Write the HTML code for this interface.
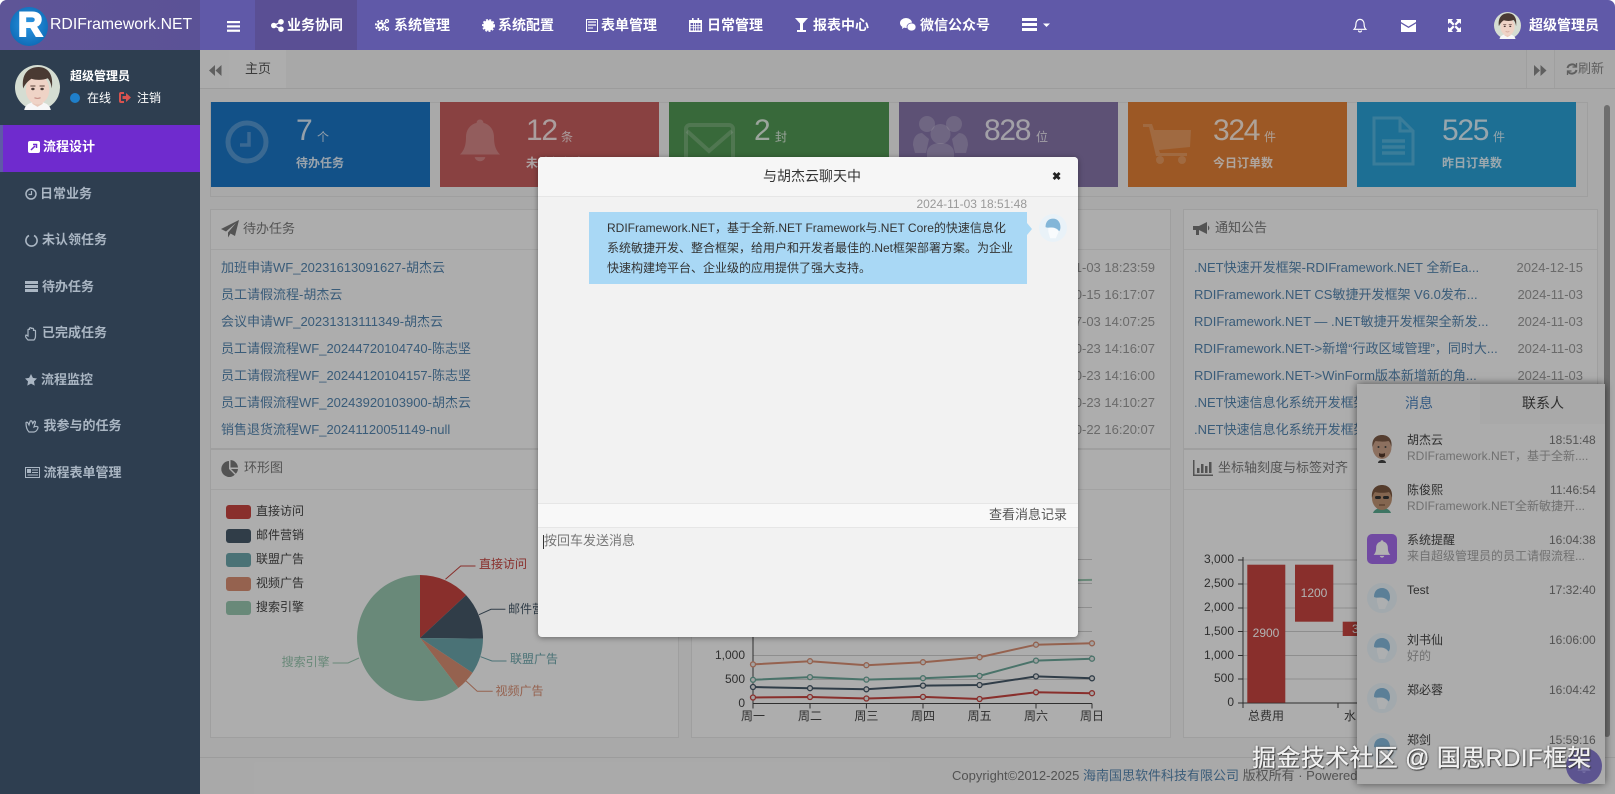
<!DOCTYPE html>
<html lang="zh-CN">
<head>
<meta charset="utf-8">
<title>RDIFramework.NET</title>
<style>
html,body{margin:0;padding:0;width:1615px;height:794px;overflow:hidden;background:#fff}
body{font-family:"Liberation Sans","Noto Sans CJK SC",sans-serif;font-size:13px;color:#333;position:relative}
#root{position:absolute;left:0;top:0;width:1615px;height:794px;overflow:hidden;background:#f3f3f3;border-radius:7px 7px 0 0}
.a{position:absolute}
.t{position:absolute;white-space:nowrap;line-height:20px}
.i{position:absolute;overflow:visible}
.nav{color:#fff;font-weight:bold;font-size:14px}
.menu{color:#aab6c3;font-weight:bold;font-size:13px}
.card{position:absolute;top:102px;height:85px;width:219px}
.num{font-size:30px;letter-spacing:-1.300px;color:rgba(255,255,255,.82);font-weight:normal;line-height:34px;position:absolute;white-space:nowrap;top:114px}
.unit{font-size:12px;color:rgba(255,255,255,.8);position:absolute;white-space:nowrap;top:127px;line-height:20px}
.lab{font-size:12px;font-weight:bold;color:rgba(255,255,255,.85);position:absolute;white-space:nowrap;top:153px;line-height:20px}
.panel{position:absolute;background:#f8f8f8;border:1px solid #e4e4e4;box-sizing:border-box}
.hline{position:absolute;height:1px;background:#e8e8e8}
.ph{color:#777;font-size:13px}
.lk{color:#5484ae;font-size:13px}
.dt{color:#999;font-size:13px;text-align:right}
.nm{font-size:12px;color:#444}
.tm{font-size:12px;color:#777}
.pv{font-size:12px;color:#a2a2a2}
</style>
</head>
<body>
<div id="root">
<svg width="0" height="0" style="position:absolute">
<defs>
<symbol id="man" viewBox="0 0 44 44">
<circle cx="22" cy="22" r="22" fill="#d5ddd2"/>
<path d="M9 44c1-6 7-8 13-8s12 2 13 8z" fill="#f7f7f7"/>
<path d="M17 31h10v7l-5 3-5-3z" fill="#e8c8ba"/>
<ellipse cx="22" cy="24" rx="11.500" ry="14.500" fill="#efd3c6"/>
<path d="M8 23C6 9 13 2 23 2c9 0 15 7 13 21-.5-4-2-8-4-10-5 2-11 2-16 .500-3 2-6 5-8 9.500z" fill="#4a3a33"/>
<path d="M15 20.500h5M24 20.500h5" stroke="#5a4038" stroke-width="1"/>
<ellipse cx="17.500" cy="23.500" rx="1.700" ry="1.200" fill="#4a3a36"/><ellipse cx="26.500" cy="23.500" rx="1.700" ry="1.200" fill="#4a3a36"/>
<path d="M19 32c2 .8 4 .8 6 0" stroke="#c28a80" fill="none"/>
</symbol>
<symbol id="def" viewBox="0 0 30 30">
<circle cx="15" cy="15" r="15" fill="#e9f2f8"/>
<path d="M7 14C7 8 10.500 5 15 5c5 0 8 4 8 9 0 2-.5 3.500-1.500 4.500C20 16 17 14.500 14 14.500c-2.500 0-5 .5-7-.5z" fill="#83b6d8"/>
<path d="M10 15c2-.5 4-.5 6 0 3 1.500 5 3 5 4l-3 7h-6l-2-7z" fill="#f8fbfd"/>
</symbol>
<symbol id="bell" viewBox="0 0 24 24">
<path d="M12 1.500c-1 0-1.700.7-1.700 1.700C7 4 5 6.800 5 10.300c0 4.200-1 6.700-3 8.700h20c-2-2-3-4.500-3-8.700 0-3.500-2-6.300-5.300-7.100 0-1-.7-1.700-1.700-1.700zM9.300 20.300a2.800 2.800 0 0 0 5.400 0z"/>
</symbol>
<radialGradient id="lg" cx=".5" cy=".45" r=".55"><stop offset="0" stop-color="#2b97e4"/><stop offset="1" stop-color="#0f6db8"/></radialGradient>
</defs>
</svg>

<!-- tab bar -->
<div class="a" style="left:200px;top:50px;width:1415px;height:39px;background:#f1f1f1;border-bottom:1px solid #e0e0e0;box-sizing:border-box"></div>
<div class="a" style="left:200px;top:50px;width:29px;height:38px;background:#f6f6f6"></div>
<svg class="i" style="left:209px;top:65px" width="13" height="11" viewBox="0 0 13 11" fill="#888"><path d="M6 0v11L0 5.500zM12.500 0v11l-6-5.500z"/></svg>
<div class="a" style="left:229px;top:50px;width:57px;height:38px;background:#f8f8f8"></div>
<div class="t" style="left:245px;top:59px;color:#555;font-size:13px">主页</div>
<div class="a" style="left:1526px;top:50px;width:29px;height:38px;background:#f3f3f3;border-left:1px solid #e4e4e4;border-right:1px solid #e4e4e4;box-sizing:border-box"></div>
<svg class="i" style="left:1534px;top:65px" width="13" height="11" viewBox="0 0 13 11" fill="#888"><path d="M0 0v11l6-5.500zM6.500 0v11l6-5.500z"/></svg>
<svg class="i" style="left:1566px;top:63px" width="12" height="12" viewBox="0 0 12 12" fill="none" stroke="#888" stroke-width="2"><path d="M1.500 5A4.700 4.700 0 0 1 10 3.500M10.500 7A4.700 4.700 0 0 1 2 8.500"/><path d="M10.500 0v4h-4M1.500 12V8h4" stroke-width="1.300"/></svg>
<div class="t" style="left:1578px;top:59px;color:#888;font-size:13px">刷新</div>

<!-- stat container -->
<div class="panel" style="left:210px;top:102px;width:1378px;height:95px;background:#f3f3f3"></div>
<div class="card" style="left:211px;background:#1a74c3"></div>
<div class="card" style="left:440px;background:#c55e5e"></div>
<div class="card" style="left:669px;width:220px;background:#519753"></div>
<div class="card" style="left:899px;background:#8675a8"></div>
<div class="card" style="left:1128px;background:#e07f35"></div>
<div class="card" style="left:1357px;background:#2aa0d5"></div>

<svg class="i" style="left:225px;top:120px" width="44" height="44" viewBox="0 0 44 44" fill="none" stroke="#fff" stroke-opacity=".25"><circle cx="22" cy="22" r="19" stroke-width="5"/><path d="M24 12v13H15" stroke-width="3.500"/></svg>
<svg class="i" style="left:456px;top:115px;fill:#fff;fill-opacity:.25" width="48" height="51"><use href="#bell" width="48" height="51"/></svg>
<svg class="i" style="left:684px;top:123px" width="51" height="44" viewBox="0 0 51 44" fill="none" stroke="#fff" stroke-opacity=".2" stroke-width="4"><rect x="2" y="2" width="47" height="40" rx="4"/><path d="M3 8l22 20L48 8"/></svg>
<svg class="i" style="left:913px;top:115px" width="55" height="50" viewBox="0 0 55 50" fill="#fff" fill-opacity=".22"><circle cx="14" cy="9" r="8"/><circle cx="41" cy="9" r="8"/><circle cx="27.500" cy="19" r="10"/><path d="M0 30c0-8 4-12 9-12l7 6-3 14H2zM55 30c0-8-4-12-9-12l-7 6 3 14h11zM14 50V38c0-6 5-10 13.500-10S41 32 41 38v12z"/></svg>
<svg class="i" style="left:1143px;top:123px" width="48" height="41" viewBox="0 0 48 41" fill="#fff" fill-opacity=".2"><path d="M0 1h9l2 6h37l-1 17-31 3 1 3h27v3H13L6 4H0z"/><circle cx="17" cy="37" r="4"/><circle cx="39" cy="37" r="4"/></svg>
<svg class="i" style="left:1372px;top:116px" width="43" height="50" viewBox="0 0 43 50" fill="none" stroke="#fff" stroke-opacity=".2" stroke-width="3"><path d="M2 2h26l13 13v33H2zM28 2v13h13"/><path d="M10 25h23M10 31h23M10 37h23" stroke-width="3.500"/></svg>

<div class="num" style="left:296px">7</div><div class="unit" style="left:317px">个</div><div class="lab" style="left:296px">待办任务</div>
<div class="num" style="left:526px">12</div><div class="unit" style="left:561px">条</div><div class="lab" style="left:526px">未认领任务</div>
<div class="num" style="left:754px">2</div><div class="unit" style="left:775px">封</div>
<div class="num" style="left:984px">828</div><div class="unit" style="left:1036px">位</div>
<div class="num" style="left:1213px">324</div><div class="unit" style="left:1264px">件</div><div class="lab" style="left:1213px">今日订单数</div>
<div class="num" style="left:1442px">525</div><div class="unit" style="left:1493px">件</div><div class="lab" style="left:1442px">昨日订单数</div>

<!-- row 1 panels -->
<div class="panel" style="left:210px;top:209px;width:961px;height:240px"></div>
<div class="hline" style="left:211px;top:249px;width:959px"></div>
<svg class="i" style="left:221px;top:220px" width="18" height="18" viewBox="0 0 18 18" fill="#777"><path d="M18 0L14 16 9.500 13.500 7 17.500V12.500L15 3 5 11.500 0 9z"/></svg>
<div class="t ph" style="left:243px;top:219px">待办任务</div>
<div class="t lk" style="left:221px;top:258px">加班申请WF_20231613091627-胡杰云</div>
<div class="t lk" style="left:221px;top:285px">员工请假流程-胡杰云</div>
<div class="t lk" style="left:221px;top:312px">会议申请WF_20231313111349-胡杰云</div>
<div class="t lk" style="left:221px;top:339px">员工请假流程WF_20244720104740-陈志坚</div>
<div class="t lk" style="left:221px;top:366px">员工请假流程WF_20244120104157-陈志坚</div>
<div class="t lk" style="left:221px;top:393px">员工请假流程WF_20243920103900-胡杰云</div>
<div class="t lk" style="left:221px;top:420px">销售退货流程WF_20241120051149-null</div>
<div class="t dt" style="right:460px;top:258px">2024-11-03 18:23:59</div>
<div class="t dt" style="right:460px;top:285px">2024-10-15 16:17:07</div>
<div class="t dt" style="right:460px;top:312px">2024-07-03 14:07:25</div>
<div class="t dt" style="right:460px;top:339px">2024-10-23 14:16:07</div>
<div class="t dt" style="right:460px;top:366px">2024-10-23 14:16:00</div>
<div class="t dt" style="right:460px;top:393px">2024-10-23 14:10:27</div>
<div class="t dt" style="right:460px;top:420px">2024-10-22 16:20:07</div>

<div class="panel" style="left:1183px;top:209px;width:415px;height:240px"></div>
<div class="hline" style="left:1184px;top:249px;width:413px"></div>
<svg class="i" style="left:1193px;top:222px" width="17" height="14" viewBox="0 0 17 14" fill="#777"><path d="M0 4h6L14 0v12L6 8v5H3V8H0zM15 3.500a3 3 0 0 1 0 5z"/></svg>
<div class="t ph" style="left:1215px;top:218px">通知公告</div>
<div class="t lk" style="left:1194px;top:258px">.NET快速开发框架-RDIFramework.NET 全新Ea...</div>
<div class="t lk" style="left:1194px;top:285px">RDIFramework.NET CS敏捷开发框架 V6.0发布...</div>
<div class="t lk" style="left:1194px;top:312px">RDIFramework.NET — .NET敏捷开发框架全新发...</div>
<div class="t lk" style="left:1194px;top:339px">RDIFramework.NET-&gt;新增“行政区域管理”，同时大...</div>
<div class="t lk" style="left:1194px;top:366px">RDIFramework.NET-&gt;WinForm版本新增新的角...</div>
<div class="t lk" style="left:1194px;top:393px">.NET快速信息化系统开发框架 V6.0 版本发布...</div>
<div class="t lk" style="left:1194px;top:420px">.NET快速信息化系统开发框架 V5.1 版本发布...</div>
<div class="t dt" style="right:32px;top:258px">2024-12-15</div>
<div class="t dt" style="right:32px;top:285px">2024-11-03</div>
<div class="t dt" style="right:32px;top:312px">2024-11-03</div>
<div class="t dt" style="right:32px;top:339px">2024-11-03</div>
<div class="t dt" style="right:32px;top:366px">2024-11-03</div>

<!-- row 2 panels -->
<div class="panel" style="left:210px;top:449px;width:469px;height:289px"></div>
<div class="panel" style="left:691px;top:449px;width:480px;height:289px"></div>
<div class="panel" style="left:1183px;top:449px;width:415px;height:289px"></div>
<div class="hline" style="left:211px;top:489px;width:467px"></div>
<div class="hline" style="left:692px;top:489px;width:478px"></div>
<div class="hline" style="left:1184px;top:489px;width:413px"></div>
<svg class="i" style="left:221px;top:460px" width="17" height="17" viewBox="0 0 17 17" fill="#777"><path d="M8 1v8l5.800 5.800A8 8 0 1 1 8 1zM9.500 0A8 8 0 0 1 17 7.500H9.500zM10 9h7a8 8 0 0 1-2.200 4.800z"/></svg>
<div class="t ph" style="left:244px;top:458px">环形图</div>
<svg class="i" style="left:1193px;top:460px" width="20" height="16" viewBox="0 0 20 16" fill="#777"><path d="M0 0h1.500v14.500H20V16H0z"/><rect x="4" y="8" width="2.500" height="5"/><rect x="8" y="4" width="2.500" height="9"/><rect x="12" y="6" width="2.500" height="7"/><rect x="16" y="2" width="2.500" height="11"/></svg>
<div class="t ph" style="left:1218px;top:458px">坐标轴刻度与标签对齐</div>

<!-- charts -->
<svg class="i" style="left:0;top:0;font-family:'Liberation Sans','Noto Sans CJK SC',sans-serif;font-size:12px" width="1615" height="794" viewBox="0 0 1615 794">
<rect x="226" y="505" width="25" height="14" rx="3" fill="#c4443f"/>
<rect x="226" y="529" width="25" height="14" rx="3" fill="#465868"/>
<rect x="226" y="553" width="25" height="14" rx="3" fill="#6ba4aa"/>
<rect x="226" y="577" width="25" height="14" rx="3" fill="#d68d72"/>
<rect x="226" y="601" width="25" height="14" rx="3" fill="#97c4ae"/>
<g fill="#444"><text x="256" y="515">直接访问</text><text x="256" y="539">邮件营销</text><text x="256" y="563">联盟广告</text><text x="256" y="587">视频广告</text><text x="256" y="611">搜索引擎</text></g>
<path d="M420 638V575A63 63 0 0 1 466.100 595.100z" fill="#c4443f"/>
<path d="M420 638L466.100 595.100A63 63 0 0 1 483 638.660z" fill="#465868"/>
<path d="M420 638L483 638.660A63 63 0 0 1 472.500 672.800z" fill="#6ba4aa"/>
<path d="M420 638L472.500 672.800A63 63 0 0 1 458.400 688z" fill="#d68d72"/>
<path d="M420 638L458.400 688A63 63 0 1 1 420 575z" fill="#97c4ae"/>
<g fill="none" stroke-width="1">
<path d="M445.500 579.300L460.700 566H475.500" stroke="#c4443f"/>
<path d="M479 614.700L491 609.300H505.400" stroke="#465868"/>
<path d="M480.600 656.700L492 661H506.500" stroke="#6ba4aa"/>
<path d="M465.800 680.700L477.200 691.300H492.700" stroke="#d68d72"/>
<path d="M359 658L348 663H332.600" stroke="#97c4ae"/>
</g>
<text x="479" y="568" fill="#c4443f">直接访问</text>
<text x="508" y="613" fill="#465868">邮件营销</text>
<text x="510" y="663" fill="#6ba4aa">联盟广告</text>
<text x="495.500" y="695" fill="#d68d72">视频广告</text>
<text x="281.600" y="666" fill="#97c4ae">搜索引擎</text>
<g stroke="#ccc" stroke-width="1"><path d="M753 559.500H1092M753 583.500H1092M753 607.500H1092M753 631.500H1092M753 655.500H1092M753 679.500H1092"/></g>
<path d="M753 559V703.500H1092M753 703.500v5M810 703.500v5M866.400 703.500v5M923 703.500v5M979.600 703.500v5M1036 703.500v5M1092 703.500v5" stroke="#444" fill="none"/>
<g fill="#444" text-anchor="end"><text x="745" y="659">1,000</text><text x="745" y="683">500</text><text x="745" y="707">0</text></g>
<g fill="#444" text-anchor="middle"><text x="753" y="720">周一</text><text x="810" y="720">周二</text><text x="866.400" y="720">周三</text><text x="923" y="720">周四</text><text x="979.600" y="720">周五</text><text x="1036" y="720">周六</text><text x="1092" y="720">周日</text></g>
<g fill="none" stroke-width="2">
<path stroke="#c4443f" d="M753 697.500L810 697L866.400 698.500L923 696.900L979.600 699L1036 692.300L1092 693.200"/>
<path stroke="#465868" d="M753 687L810 688.200L866.400 689.300L923 685.600L979.600 685L1036 676.400L1092 678.300"/>
<path stroke="#6aa598" d="M753 679.800L810 677.100L866.400 679.600L923 678.200L979.600 675.900L1036 660.600L1092 658.700"/>
<path stroke="#d68d72" d="M753 664.400L810 661.200L866.400 665.200L923 662.200L979.600 657.200L1036 644.700L1092 643.300"/>
<path stroke="#97c4ae" d="M753 625L810 616.400L866.400 621.900L923 617.400L979.600 595.300L1036 580.900L1092 579.900"/>
</g>
<g fill="#e8e8e8" stroke-width="1.300">
<g stroke="#c4443f"><circle cx="753" cy="697.500" r="2.500"/><circle cx="810" cy="697" r="2.500"/><circle cx="866.400" cy="698.500" r="2.500"/><circle cx="923" cy="696.900" r="2.500"/><circle cx="979.600" cy="699" r="2.500"/><circle cx="1036" cy="692.300" r="2.500"/><circle cx="1092" cy="693.200" r="2.500"/></g>
<g stroke="#465868"><circle cx="753" cy="687" r="2.500"/><circle cx="810" cy="688.200" r="2.500"/><circle cx="866.400" cy="689.300" r="2.500"/><circle cx="923" cy="685.600" r="2.500"/><circle cx="979.600" cy="685" r="2.500"/><circle cx="1036" cy="676.400" r="2.500"/><circle cx="1092" cy="678.300" r="2.500"/></g>
<g stroke="#6aa598"><circle cx="753" cy="679.800" r="2.500"/><circle cx="810" cy="677.100" r="2.500"/><circle cx="866.400" cy="679.600" r="2.500"/><circle cx="923" cy="678.200" r="2.500"/><circle cx="979.600" cy="675.900" r="2.500"/><circle cx="1036" cy="660.600" r="2.500"/><circle cx="1092" cy="658.700" r="2.500"/></g>
<g stroke="#d68d72"><circle cx="753" cy="664.400" r="2.500"/><circle cx="810" cy="661.200" r="2.500"/><circle cx="866.400" cy="665.200" r="2.500"/><circle cx="923" cy="662.200" r="2.500"/><circle cx="979.600" cy="657.200" r="2.500"/><circle cx="1036" cy="644.700" r="2.500"/><circle cx="1092" cy="643.300" r="2.500"/></g>
</g>
<g stroke="#ccc"><path d="M1243 560H1570M1243 584H1570M1243 608H1570M1243 631.500H1570M1243 655.500H1570M1243 679H1570"/></g>
<path d="M1243 557V703H1570M1238 560h5M1238 584h5M1238 608h5M1238 631.500h5M1238 655.500h5M1238 679h5M1238 703h5M1243 703v5M1338 703v5" stroke="#444" fill="none"/>
<g fill="#444" text-anchor="end"><text x="1234" y="563">3,000</text><text x="1234" y="587">2,500</text><text x="1234" y="611">2,000</text><text x="1234" y="635">1,500</text><text x="1234" y="659">1,000</text><text x="1234" y="682">500</text><text x="1234" y="706">0</text></g>
<rect x="1247.300" y="564.700" width="38" height="138" fill="#c4443f"/>
<rect x="1295" y="564.700" width="38.300" height="57" fill="#c4443f"/>
<rect x="1342.700" y="621.700" width="38" height="14.300" fill="#c4443f"/>
<g fill="#fff" text-anchor="middle"><text x="1266" y="637">2900</text><text x="1314" y="597">1200</text><text x="1362" y="633">300</text></g>
<g fill="#444" text-anchor="middle"><text x="1266" y="720">总费用</text><text x="1362" y="720">水电费</text></g>
</svg>

<div class="a" style="left:1604px;top:105px;width:6px;height:632px;background:#9e9e9e;border-radius:3px"></div>

<!-- footer -->
<div class="hline" style="left:200px;top:757px;width:1415px;background:#e0e0e0"></div>
<div class="t" style="left:952px;top:766px;color:#777;font-size:13px">Copyright©2012-2025 <span style="color:#5484ae">海南国思软件科技有限公司</span> 版权所有 · Powered by RDIFramework.NET</div>

<!-- chat panel -->
<div class="a" style="left:1357px;top:384px;width:248px;height:400px;background:#f6f6f6;overflow:hidden;box-shadow:0 0 8px rgba(0,0,0,.55)">
<div class="a" style="left:-1357px;top:-384px;width:1615px;height:794px">
<div class="a" style="left:1480px;top:384px;width:125px;height:40px;background:#f2f2f2"></div>
<div class="t" style="left:1405px;top:393px;font-size:14px;color:#4f85bd">消息</div>
<div class="t" style="left:1522px;top:393px;font-size:14px;color:#444">联系人</div>

<svg class="i" style="left:1367px;top:433px" width="30" height="30" viewBox="0 0 30 30"><path d="M11 30c0-2 2-3 4-3s4 1 4 3z" fill="#444"/><ellipse cx="15" cy="14" rx="9.500" ry="12" fill="#c9a189"/><path d="M5.500 14C4.500 6 9 2 15 2s10.500 4 9.500 12c-1-3-1.500-5-3-6-4 .8-8 .8-13 0-1 1-2 3-3 6z" fill="#7a5a45"/><circle cx="11.500" cy="14" r="1" fill="#444"/><circle cx="18.500" cy="14" r="1" fill="#444"/><path d="M12 20c2 1 4 1 6 0v3c-2 2-4 2-6 0z" fill="#54392c"/></svg>
<div class="t nm" style="left:1407px;top:430px">胡杰云</div><div class="t tm" style="top:430px;left:1549px">18:51:48</div>
<div class="t pv" style="left:1407px;top:446px">RDIFramework.NET，基于全新....</div>

<svg class="i" style="left:1367px;top:483px" width="30" height="30" viewBox="0 0 30 30"><path d="M6 30c1-3 4-5 9-5s8 2 9 5z" fill="#5aa88f"/><ellipse cx="15" cy="15" rx="10" ry="12" fill="#bd9273"/><path d="M5 15C4 6 9 2 15 2s11 4 10 13c-1-3-2-5-3-6-4 1-10 1-14 0-1 1-2 3-3 6z" fill="#7a5640"/><rect x="8" y="13" width="6" height="3" rx="1.500" fill="#333"/><rect x="16" y="13" width="6" height="3" rx="1.500" fill="#333"/><path d="M12 22h6" stroke="#6a4a36"/></svg>
<div class="t nm" style="left:1407px;top:480px">陈俊熙</div><div class="t tm" style="top:480px;left:1550px">11:46:54</div>
<div class="t pv" style="left:1407px;top:496px">RDIFramework.NET全新敏捷开...</div>

<div class="a" style="left:1367px;top:534px;width:30px;height:30px;border-radius:5px;background:#a26ae8"></div>
<svg class="i" style="left:1372px;top:539px;fill:#fff" width="20" height="20"><use href="#bell" width="20" height="20"/></svg>
<div class="t nm" style="left:1407px;top:530px">系统提醒</div><div class="t tm" style="top:530px;left:1549px">16:04:38</div>
<div class="t pv" style="left:1407px;top:546px">来自超级管理员的员工请假流程...</div>

<svg class="i" style="left:1367px;top:583px" width="30" height="30"><use href="#def" width="30" height="30"/></svg>
<div class="t nm" style="left:1407px;top:580px">Test</div><div class="t tm" style="top:580px;left:1549px">17:32:40</div>

<svg class="i" style="left:1367px;top:633px" width="30" height="30"><use href="#def" width="30" height="30"/></svg>
<div class="t nm" style="left:1407px;top:630px">刘书仙</div><div class="t tm" style="top:630px;left:1549px">16:06:00</div>
<div class="t pv" style="left:1407px;top:646px">好的</div>

<svg class="i" style="left:1367px;top:683px" width="30" height="30"><use href="#def" width="30" height="30"/></svg>
<div class="t nm" style="left:1407px;top:680px">郑必蓉</div><div class="t tm" style="top:680px;left:1549px">16:04:42</div>

<svg class="i" style="left:1367px;top:733px" width="30" height="30"><use href="#def" width="30" height="30"/></svg>
<div class="t nm" style="left:1407px;top:730px">郑剑</div><div class="t tm" style="top:730px;left:1549px">15:59:16</div>
</div>
</div>

<!-- dim overlay -->
<div class="a" style="left:200px;top:50px;width:1415px;height:744px;background:rgba(0,0,0,.3)"></div>

<!-- header -->
<div class="a" style="left:0;top:0;width:1615px;height:50px;background:#6059a8"></div>
<div class="a" style="left:0;top:0;width:200px;height:50px;background:linear-gradient(90deg,#5e5597,#5b5296)"></div>
<div class="a" style="left:255px;top:0;width:102px;height:50px;background:#5a4f94"></div>
<svg class="i" style="left:10px;top:7px" width="38" height="39" viewBox="0 0 38 39"><ellipse cx="19" cy="19.500" rx="19" ry="19.500" fill="url(#lg)"/></svg>
<div class="t" style="left:18px;top:6px;line-height:38px;font-size:34px;font-weight:bold;color:#fff;-webkit-text-stroke:2px #fff">R</div>
<div class="t" style="left:50px;top:15px;font-size:15.800px;color:#fff">RDIFramework.NET</div>

<svg class="i" style="left:227px;top:21px" width="13" height="11" viewBox="0 0 13 11" fill="#fff"><rect width="13" height="2.200"/><rect y="4.300" width="13" height="2.200"/><rect y="8.600" width="13" height="2.200"/></svg>
<svg class="i" style="left:271px;top:19px" width="13" height="13" viewBox="0 0 13 13" fill="#fff" stroke="#fff"><circle cx="2.800" cy="6.500" r="2.300"/><circle cx="10" cy="2.800" r="2.300"/><circle cx="10" cy="10.200" r="2.300"/><path d="M3 6.500L10 2.800M3 6.500L10 10.200" stroke-width="1.300"/></svg>
<div class="t nav" style="left:287px;top:15px">业务协同</div>
<svg class="i" style="left:375px;top:18px" width="15" height="14" viewBox="0 0 15 14" fill="none" stroke="#fff"><circle cx="5.500" cy="7.500" r="2.500" stroke-width="2"/><circle cx="5.500" cy="7.500" r="4.700" stroke-width="1.800" stroke-dasharray="2 1.700"/><circle cx="12" cy="3" r="1.500" stroke-width="1.300"/><circle cx="12" cy="11" r="1.500" stroke-width="1.300"/></svg>
<div class="t nav" style="left:394px;top:15px">系统管理</div>
<svg class="i" style="left:482px;top:19px" width="13" height="13" viewBox="0 0 13 13" fill="#fff"><circle cx="6.500" cy="6.500" r="5.300"/><circle cx="6.500" cy="6.500" r="5.800" fill="none" stroke="#fff" stroke-width="1.400" stroke-dasharray="2 1.500"/></svg>
<div class="t nav" style="left:498px;top:15px">系统配置</div>
<svg class="i" style="left:586px;top:19px" width="12" height="13" viewBox="0 0 12 13" fill="none" stroke="#fff"><rect x=".5" y=".5" width="11" height="12"/><path d="M2 3h8M2 6h8" stroke-width="1.300"/><path d="M2 9h5"/></svg>
<div class="t nav" style="left:601px;top:15px">表单管理</div>
<svg class="i" style="left:689px;top:18px" width="13" height="14" viewBox="0 0 13 14" fill="#fff"><path d="M0 2h13v12H0z"/><rect x="3" y="0" width="1.600" height="3"/><rect x="8.500" y="0" width="1.600" height="3"/><path d="M1.500 5h10v7.500h-10z" fill="#6059a8"/><path d="M1.500 7h10v.8h-10zM1.500 9.500h10v.8h-10zM4 5h.8v7.500H4zM6.200 5H7v7.500h-.8zM8.600 5h.8v7.500h-.8z"/></svg>
<div class="t nav" style="left:707px;top:15px">日常管理</div>
<svg class="i" style="left:795px;top:18px" width="13" height="14" viewBox="0 0 13 14" fill="#fff"><path d="M0 0h13L8 5.500V12h3v2H2v-2h3V5.500z"/></svg>
<div class="t nav" style="left:813px;top:15px">报表中心</div>
<svg class="i" style="left:900px;top:18px" width="16" height="14" viewBox="0 0 16 14" fill="#fff"><ellipse cx="6" cy="5" rx="6" ry="5"/><path d="M2.500 8L2 11l3-2z"/><ellipse cx="11.500" cy="9" rx="4.500" ry="4" stroke="#6059a8" stroke-width=".7"/></svg>
<div class="t nav" style="left:920px;top:15px">微信公众号</div>
<svg class="i" style="left:1022px;top:18px" width="29" height="14" viewBox="0 0 29 14" fill="#fff"><rect width="15" height="3"/><rect y="5" width="15" height="3"/><rect y="10" width="15" height="3"/><path d="M21 5.500h7l-3.500 3.500z"/></svg>

<svg class="i" style="left:1353px;top:18px" width="14" height="15" viewBox="0 0 24 25" fill="none" stroke="#fff" stroke-width="2"><path d="M12 2c-4 0-7 3.500-7 8 0 5-1 7-3 9h20c-2-2-3-4-3-9 0-4.500-3-8-7-8zM9.500 21a2.500 2.500 0 0 0 5 0"/></svg>
<svg class="i" style="left:1401px;top:20px" width="15" height="12" viewBox="0 0 15 12" fill="#fff"><path d="M0 0h15v2L7.500 6.500 0 2zM0 3.500l7.500 4.500L15 3.500V12H0z"/></svg>
<svg class="i" style="left:1448px;top:19px" width="13" height="13" viewBox="0 0 13 13" fill="#fff"><path d="M0 0h5L3.500 1.800 6.500 5 5 6.500 1.800 3.500 0 5zM13 0v5l-1.800-1.500L8 6.500 6.500 5 9.500 1.800 8 0zM0 13V8l1.800 1.500L5 6.500 6.500 8 3.500 11.200 5 13zM13 13H8l1.500-1.800L6.500 8 8 6.500l3.200 3L13 8z"/></svg>
<svg class="i" style="left:1494px;top:12px" width="27" height="27"><use href="#man" width="27" height="27"/></svg>
<div class="t nav" style="left:1529px;top:15px">超级管理员</div>

<!-- sidebar -->
<div class="a" style="left:0;top:50px;width:200px;height:744px;background:#2e3e50"></div>
<svg class="i" style="left:15px;top:65px" width="45" height="45"><use href="#man" width="45" height="45"/></svg>
<div class="t" style="left:70px;top:66px;color:#fff;font-size:12px;font-weight:bold">超级管理员</div>
<div class="a" style="left:70px;top:93px;width:10px;height:10px;border-radius:50%;background:#1f7fca"></div>
<div class="t" style="left:87px;top:88px;color:#fff;font-size:12px">在线</div>
<svg class="i" style="left:119px;top:92px" width="12" height="11" viewBox="0 0 12 11" fill="#d9534f"><path d="M5 0H2a2 2 0 0 0-2 2v7a2 2 0 0 0 2 2h3V9H2V2h3z"/><path d="M7 1l5 4.500L7 10V7H3.500V4H7z"/></svg>
<div class="t" style="left:137px;top:88px;color:#fff;font-size:12px">注销</div>

<div class="a" style="left:0;top:125px;width:200px;height:47px;background:#6f2bce"></div>
<div class="a" style="left:0;top:125px;width:3px;height:47px;background:#5f5aa6"></div>
<svg class="i" style="left:28px;top:141px" width="12" height="12" viewBox="0 0 12 12"><rect width="12" height="12" rx="2" fill="#fff"/><path d="M3 9L7 5M5 3.500h3.500V7" stroke="#6f2bce" stroke-width="1.500" fill="none"/></svg>
<div class="t" style="left:43px;top:137px;color:#fff;font-size:13px;font-weight:bold">流程设计</div>

<svg class="i" style="left:25px;top:188px" width="12" height="12" viewBox="0 0 12 12" fill="none" stroke="#aab6c3" stroke-width="1.500"><circle cx="6" cy="6" r="5"/><path d="M6.500 3v3.500H3.500" stroke-width="1.200"/></svg>
<div class="t menu" style="left:40px;top:184px">日常业务</div>
<svg class="i" style="left:25px;top:234px" width="13" height="13" viewBox="0 0 13 13" fill="none" stroke="#aab6c3" stroke-width="1.600"><path d="M4 1.500A5.600 5.600 0 1 0 9 1.500"/></svg>
<div class="t menu" style="left:42px;top:230px">未认领任务</div>
<svg class="i" style="left:25px;top:281px" width="13" height="11" viewBox="0 0 13 11" fill="#aab6c3"><rect width="13" height="3"/><rect y="4" width="13" height="3"/><rect y="8" width="13" height="3"/></svg>
<div class="t menu" style="left:42px;top:277px">待办任务</div>
<svg class="i" style="left:25px;top:327px" width="12" height="14" viewBox="0 0 12 14" fill="none" stroke="#aab6c3" stroke-width="1.200"><path d="M3 13C1 11 0 9 1 8l2 1V3c0-1 1.500-1 1.500 0V1.500c0-1 2-1 2 0V2c0-1 2-1 2 0v2c0-1 2-1 2 0v5c0 2-.5 3-1.500 4z"/></svg>
<div class="t menu" style="left:42px;top:323px">已完成任务</div>
<svg class="i" style="left:25px;top:374px" width="12" height="12" viewBox="0 0 12 12" fill="#aab6c3"><path d="M6 0l1.900 3.900 4.100.6-3 2.900.7 4.200L6 9.600 2.300 11.600 3 7.400 0 4.500l4.100-.6z"/></svg>
<div class="t menu" style="left:41px;top:370px">流程监控</div>
<svg class="i" style="left:25px;top:420px" width="14" height="13" viewBox="0 0 14 13" fill="none" stroke="#aab6c3" stroke-width="1.200"><path d="M4 12C2 10 1 6 1 3c0-1 1.500-1 2 0l1 2 1-3.500c.3-1 1.700-1 2 0l.7 2 1.300-2c.5-.7 1.700-.2 1.400.8L9 7c2-1 4-.5 4 .5 0 1.500-2 4.500-4 4.500z"/></svg>
<div class="t menu" style="left:43.500px;top:416px">我参与的任务</div>
<svg class="i" style="left:25px;top:467px" width="15" height="11" viewBox="0 0 15 11" fill="none" stroke="#aab6c3"><rect x=".5" y=".5" width="14" height="10"/><rect x="2.500" y="2.500" width="3" height="3" fill="#aab6c3"/><path d="M7 3h6M7 5.500h6M2.500 8h10.500"/></svg>
<div class="t menu" style="left:43.500px;top:463px">流程表单管理</div>

<!-- modal -->
<div class="a" style="left:538px;top:157px;width:540px;height:480px;background:#f2f2f2;border-radius:4px;box-shadow:0 1px 6px rgba(0,0,0,.4);overflow:hidden">
<div class="a" style="left:-538px;top:-157px;width:1615px;height:794px">
<div class="a" style="left:538px;top:157px;width:540px;height:40px;background:#f6f6f6;border-bottom:1px solid #e6e6e6;box-sizing:border-box"></div>
<div class="t" style="left:763px;top:166px;font-size:14px;color:#333">与胡杰云聊天中</div>
<div class="t" style="left:1052px;top:167px;font-size:11px;font-weight:bold;color:#222">✖</div>
<div class="t" style="right:588px;top:194px;font-size:12px;color:#999">2024-11-03 18:51:48</div>
<div class="a" style="left:589px;top:212px;width:438px;height:72px;background:#a9d8f5"></div>
<div class="a" style="left:1027px;top:223px;width:0;height:0;border-left:5px solid #a9d8f5;border-top:6px solid transparent;border-bottom:6px solid transparent"></div>
<div class="t" style="left:607px;top:218px;font-size:12px;color:#333">RDIFramework.NET，基于全新.NET Framework与.NET Core的快速信息化</div>
<div class="t" style="left:607px;top:238px;font-size:12px;color:#333">系统敏捷开发、整合框架，给用户和开发者最佳的.Net框架部署方案。为企业</div>
<div class="t" style="left:607px;top:258px;font-size:12px;color:#333">快速构建垮平台、企业级的应用提供了强大支持。</div>
<svg class="i" style="left:1039px;top:214px" width="28" height="28"><use href="#def" width="28" height="28"/></svg>
<div class="a" style="left:538px;top:503px;width:540px;height:25px;background:#f8f8f8;border-top:1px solid #e6e6e6;border-bottom:1px solid #e6e6e6;box-sizing:border-box"></div>
<div class="t" style="right:548px;top:505px;font-size:13px;color:#555">查看消息记录</div>
<div class="a" style="left:543px;top:535px;width:1px;height:14px;background:#333"></div>
<div class="t" style="left:544px;top:531px;font-size:13px;color:#777">按回车发送消息</div>
</div>
</div>

<!-- floating bell + watermark -->
<div class="a" style="left:1566px;top:748px;width:36px;height:36px;border-radius:50%;background:#5c5490"></div>
<svg class="i" style="left:1576px;top:758px;fill:#7a74a8" width="16" height="16"><use href="#bell" width="16" height="16"/></svg>
<div class="t" style="left:1252px;top:744px;line-height:30px;font-size:24px;letter-spacing:.35px;color:#f0f0f0;-webkit-text-stroke:.3px #f0f0f0;text-shadow:1px 1px 1px #333,0 0 2px #444">掘金技术社区 @ 国思RDIF框架</div>

</div>
</body>
</html>
